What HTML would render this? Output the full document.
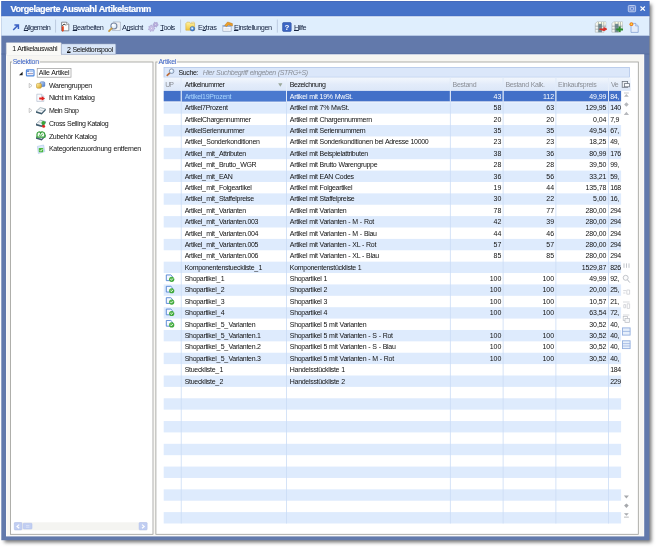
<!DOCTYPE html>
<html><head><meta charset="utf-8"><title>Vorgelagerte Auswahl Artikelstamm</title><style>html,body{margin:0;padding:0;}
html{background:#fff;}
body{width:658px;height:548px;position:relative;overflow:hidden;will-change:transform;font-family:"Liberation Sans",sans-serif;font-size:7px;letter-spacing:-0.3px;word-spacing:0.35px;color:#111;}
div,span,svg{position:absolute;box-sizing:border-box;}
span{white-space:nowrap;}
u{text-decoration:underline;text-underline-offset:-0.2px;text-decoration-thickness:0.5px;}
#title{left:10.5px;top:3.8px;-webkit-text-stroke:0.2px #fff;font-size:9.1px;font-weight:bold;color:#fff;letter-spacing:0;line-height:10px;}
.tl{top:22.9px;line-height:9px;color:#14223f;font-size:7.3px;}
.tabt{line-height:9px;color:#111;}
.gbl{color:#3b63c9;line-height:8px;}
.ht{top:80.2px;line-height:9px;}
.g{color:#8b8f96;}
.c{line-height:9px;}
.n{letter-spacing:-0.08px;}
.s{color:#fff;}
.c1.s{color:#a9d6ff;}
.ti{line-height:9px;left:48.9px;}

#shadow{left:1.3px;top:1.3px;width:648.1px;height:538.9px;box-shadow:3.3px 3.3px 3.6px 0 rgba(0,0,0,.55);}
i{font-style:normal;letter-spacing:0.35px;}
</style></head><body>
<div id="shadow"></div>
<svg style="left:0;top:0;width:658px;height:548px" viewBox="0 0 658 548"><rect x="1.30" y="1.30" width="648.10" height="538.90" fill="#6279ab"></rect>
<rect x="1.30" y="1.30" width="648.10" height="15.20" fill="#4672c8"></rect>
<rect x="1.30" y="1.30" width="648.10" height="0.70" fill="#3c60b6"></rect>
<rect x="1.30" y="15.90" width="648.10" height="0.60" fill="#3c5eb0"></rect>
<rect x="1.30" y="16.50" width="648.10" height="19.20" fill="#dfeefd"></rect>
<rect x="1.30" y="16.50" width="648.10" height="0.80" fill="#f4f9ff"></rect>
<rect x="1.30" y="35.10" width="648.10" height="0.60" fill="#b4c6e6"></rect>
<rect x="1.30" y="53.70" width="648.10" height="0.60" fill="#50669a"></rect>
<rect x="55.15" y="19.60" width="0.90" height="13.00" fill="#b9c8de"></rect>
<rect x="180.15" y="19.60" width="0.90" height="13.00" fill="#b9c8de"></rect>
<rect x="276.85" y="19.60" width="0.90" height="13.00" fill="#b9c8de"></rect>
<rect x="6.00" y="54.30" width="638.20" height="482.10" fill="#fdfdfc"></rect>
<rect x="6.60" y="55.00" width="636.90" height="480.60" fill="#f7f6f2"></rect>
<path d="M61.3 54.3V44.7Q61.3 43.9 62.1 43.9H114.9Q115.7 43.9 115.7 44.7V54.3Z" fill="#d9e6f8" stroke="#9aa7c0" stroke-width="0.5"></path>
<path d="M6.1 54.8V43.3Q6.1 42.5 6.9 42.5H60.5Q61.3 42.5 61.3 43.3V54.8Z" fill="#fafaf7" stroke="#9aa7c0" stroke-width="0.5"></path>
<rect x="6.40" y="54.00" width="54.60" height="1.40" fill="#fafaf7"></rect>
<path d="M153.7 62.5V535.0H10.9" fill="none" stroke="#ffffff" stroke-width="0.7"></path>
<rect x="10.4" y="62" width="142.6" height="472.29999999999995" fill="#fff" stroke="#9c9c98" stroke-width="0.8"></rect>
<rect x="12.00" y="60.00" width="27.80" height="4.00" fill="#f7f6f2"></rect>
<path d="M639.0 62.5V535.0H156.4" fill="none" stroke="#ffffff" stroke-width="0.7"></path>
<rect x="155.9" y="62" width="482.4" height="472.29999999999995" fill="#fff" stroke="#9c9c98" stroke-width="0.8"></rect>
<rect x="157.60" y="60.00" width="19.40" height="4.00" fill="#f7f6f2"></rect>
<rect x="37.2" y="68.4" width="33.8" height="8.8" fill="#fff" stroke="#9a9a9a" stroke-width="0.7"></rect>
<rect x="14.00" y="522.30" width="133.40" height="8.00" fill="#f4f4f1"></rect>
<rect x="14.3" y="522.5" width="7.6" height="7.4" rx="0.8" fill="#c1cef2" stroke="#aebde8" stroke-width="0.5"></rect>
<rect x="23.2" y="523.2" width="8.799999999999999" height="5.8" rx="0.8" fill="#c1cef2" stroke="#aebde8" stroke-width="0.5"></rect>
<rect x="139.10000000000002" y="522.5" width="7.999999999999995" height="7.4" rx="0.8" fill="#c1cef2" stroke="#aebde8" stroke-width="0.5"></rect>
<path d="M19.2 524.6L17 526.4L19.2 528.2M142 524.6L144.2 526.4L142 528.2" stroke="#fff" stroke-width="1.2" fill="none"></path>
<path d="M26 525.6H29.4M26 527.2H29.4" stroke="#e8eefc" stroke-width="0.6"></path>
<rect x="164" y="67.4" width="465.4" height="9.8" fill="#dbe7fa" stroke="#a9c0e6" stroke-width="0.7"></rect>
<defs><linearGradient id="hg" x1="0" y1="0" x2="0" y2="1"><stop offset="0" stop-color="#f3f7fd"></stop><stop offset="0.5" stop-color="#e3ecfa"></stop><stop offset="1" stop-color="#dce7f8"></stop></linearGradient></defs>
<rect x="163.70" y="77.60" width="466.90" height="13.30" fill="url(#hg)"></rect>
<rect x="163.70" y="90.90" width="457.40" height="10.48" fill="#4270c8"></rect>
<rect x="181.60" y="90.90" width="104.50" height="10.48" fill="#4a79cf"></rect>
<rect x="163.70" y="102.28" width="457.40" height="11.38" fill="#deebfd"></rect>
<rect x="163.70" y="125.05" width="457.40" height="11.38" fill="#deebfd"></rect>
<rect x="163.70" y="147.82" width="457.40" height="11.38" fill="#deebfd"></rect>
<rect x="163.70" y="170.59" width="457.40" height="11.38" fill="#deebfd"></rect>
<rect x="163.70" y="193.36" width="457.40" height="11.38" fill="#deebfd"></rect>
<rect x="163.70" y="216.12" width="457.40" height="11.38" fill="#deebfd"></rect>
<rect x="163.70" y="238.89" width="457.40" height="11.38" fill="#deebfd"></rect>
<rect x="163.70" y="261.66" width="457.40" height="11.38" fill="#deebfd"></rect>
<rect x="163.70" y="284.43" width="457.40" height="11.38" fill="#deebfd"></rect>
<rect x="163.70" y="307.20" width="457.40" height="11.38" fill="#deebfd"></rect>
<rect x="163.70" y="329.96" width="457.40" height="11.38" fill="#deebfd"></rect>
<rect x="163.70" y="352.73" width="457.40" height="11.38" fill="#deebfd"></rect>
<rect x="163.70" y="375.50" width="457.40" height="11.38" fill="#deebfd"></rect>
<rect x="163.70" y="398.27" width="457.40" height="11.38" fill="#deebfd"></rect>
<rect x="163.70" y="421.04" width="457.40" height="11.38" fill="#deebfd"></rect>
<rect x="163.70" y="443.80" width="457.40" height="11.38" fill="#deebfd"></rect>
<rect x="163.70" y="466.57" width="457.40" height="11.38" fill="#deebfd"></rect>
<rect x="163.70" y="489.34" width="457.40" height="11.38" fill="#deebfd"></rect>
<rect x="163.70" y="512.11" width="457.40" height="11.38" fill="#deebfd"></rect>
<rect x="180.80" y="77.60" width="0.80" height="445.89" fill="#cbdcf5"></rect>
<rect x="180.80" y="77.60" width="0.80" height="23.78" fill="#edf3fc"></rect>
<rect x="286.10" y="77.60" width="0.80" height="445.89" fill="#cbdcf5"></rect>
<rect x="286.10" y="77.60" width="0.80" height="23.78" fill="#edf3fc"></rect>
<rect x="449.90" y="77.60" width="0.80" height="445.89" fill="#cbdcf5"></rect>
<rect x="449.90" y="77.60" width="0.80" height="23.78" fill="#edf3fc"></rect>
<rect x="502.70" y="77.60" width="0.80" height="445.89" fill="#cbdcf5"></rect>
<rect x="502.70" y="77.60" width="0.80" height="23.78" fill="#edf3fc"></rect>
<rect x="555.50" y="77.60" width="0.80" height="445.89" fill="#cbdcf5"></rect>
<rect x="555.50" y="77.60" width="0.80" height="23.78" fill="#edf3fc"></rect>
<rect x="608.20" y="77.60" width="0.80" height="445.89" fill="#cbdcf5"></rect>
<rect x="608.20" y="77.60" width="0.80" height="23.78" fill="#edf3fc"></rect></svg>
<span id="title" style="letter-spacing: -0.44px;">Vorgelagerte Auswahl Artikelstamm</span>
<svg style="left:0;top:0;width:658px;height:548px" viewBox="0 0 658 548"><rect x="628.3" y="5.5" width="7.3" height="6.3" rx="0.9" fill="#7593d8" stroke="#c3d1f0" stroke-width="0.9"></rect><rect x="630.4" y="7.3" width="3.1" height="2.7" rx="0.5" fill="#5b7fd0" stroke="#c3d1f0" stroke-width="0.8"></rect></svg>
<svg style="left:640.3px;top:6.2px;width:5.4px;height:5.2px" viewBox="0 0 5.4 5.2"><path d="M0.5 0.5L4.9 4.7M4.9 0.5L0.5 4.7" stroke="#fff" stroke-width="1.2"></path></svg>
<!-- toolbar items -->
<span class="tl" style="left: 23.8px; letter-spacing: -0.64px;"><u>A</u>llgemein</span>
<span class="tl" style="left: 72.7px; letter-spacing: -0.451px;"><u>B</u>earbeiten</span>
<span class="tl" style="left: 122px; letter-spacing: -0.436px;">A<u>n</u>sicht</span>
<span class="tl" style="left: 160.3px; letter-spacing: -0.549px;"><u>T</u>ools</span>
<span class="tl" style="left: 198px; letter-spacing: -0.351px;">E<u>x</u>tras</span>
<span class="tl" style="left: 234px; letter-spacing: -0.479px;"><u>E</u>instellungen</span>
<span class="tl" style="left: 294px; letter-spacing: -0.482px;"><u>H</u>ilfe</span>
<svg style="left:0;top:0;width:658px;height:548px" viewBox="0 0 658 548">
<defs>
<linearGradient id="gf" x1="0" y1="0" x2="0" y2="1"><stop offset="0" stop-color="#fff2a0"></stop><stop offset="1" stop-color="#f0c43c"></stop></linearGradient>
<radialGradient id="gg" cx="0.4" cy="0.35" r="0.7"><stop offset="0" stop-color="#9fd0ff"></stop><stop offset="1" stop-color="#1c5fc4"></stop></radialGradient>
</defs>
<!-- allgemein arrow -->
<path d="M13.2 30L17.8 25.4M14.4 24.9H18.4V28.9" stroke="#3c62c4" stroke-width="1.5" fill="none"></path>
<!-- bearbeiten -->
<path d="M61.6 22.2H66.6L68.8 24.4V30.8H61.6Z" fill="#fdfdfd" stroke="#5c6068" stroke-width="0.7"></path>
<path d="M66.6 22.2V24.4H68.8" fill="#e6e8ec" stroke="#5c6068" stroke-width="0.5"></path>
<path d="M62.4 25.8C63 24 65.4 23.8 65.8 25.4" stroke="#222" stroke-width="0.9" fill="none"></path>
<path d="M61.8 26.2H63.8V30.6L62.8 31.9L61.8 30.6Z" fill="#e2421c"></path>
<!-- ansicht -->
<path d="M113 22H120.3V30.4H112.4V29" fill="#f9fafc" stroke="#8f9bb0" stroke-width="0.6"></path>
<path d="M115 24.2H119M115.6 26H119M115.6 27.8H119" stroke="#c9d0dc" stroke-width="0.5"></path>
<circle cx="113.9" cy="26" r="3" fill="#e6f0fc" stroke="#7786a2" stroke-width="1.1"></circle>
<circle cx="113.2" cy="25.2" r="1.3" fill="#fff" fill-opacity="0.9"></circle>
<path d="M111.7 28.3L109 31.2" stroke="#c79a42" stroke-width="1.7" stroke-linecap="round"></path>
<!-- tools gears -->
<path d="M158.20 24.60L158.11 25.27L157.27 25.56L156.96 25.96L156.90 26.85L156.27 27.11L155.60 26.52L155.10 26.46L154.30 26.85L153.76 26.44L153.93 25.56L153.74 25.10L153.00 24.60L153.09 23.93L153.93 23.64L154.24 23.24L154.30 22.35L154.93 22.09L155.60 22.68L156.10 22.74L156.90 22.35L157.44 22.76L157.27 23.64L157.46 24.10Z" fill="#bdb3e0" stroke="#8f84bc" stroke-width="0.45" stroke-linejoin="round"></path><circle cx="155.6" cy="24.6" r="0.78" fill="#f3f1fb" stroke="#8f84bc" stroke-width="0.35"></circle>
<path d="M154.90 28.30L154.82 29.03L153.80 29.36L153.51 29.82L153.66 30.88L153.03 31.27L152.14 30.68L151.60 30.74L150.87 31.52L150.17 31.27L150.08 30.21L149.69 29.82L148.63 29.73L148.38 29.03L149.16 28.30L149.22 27.76L148.63 26.87L149.02 26.24L150.08 26.39L150.54 26.10L150.87 25.08L151.60 25.00L152.14 25.92L152.66 26.10L153.66 25.72L154.18 26.24L153.80 27.24L153.98 27.76Z" fill="#cbc3e8" stroke="#958bc2" stroke-width="0.45" stroke-linejoin="round"></path><circle cx="151.6" cy="28.3" r="0.99" fill="#f3f1fb" stroke="#958bc2" stroke-width="0.35"></circle>
<!-- extras folder -->
<path d="M185.8 23.6L187 22.2H189.6L190.4 23.4H194.6V30.2H185.8Z" fill="url(#gf)" stroke="#d6aa34" stroke-width="0.5"></path>
<path d="M191 22.4L194.2 22V23.4" fill="#fff6c4" stroke="#d6aa34" stroke-width="0.4"></path>
<circle cx="192.4" cy="28.7" r="2.3" fill="url(#gg)" stroke="#1c4f9e" stroke-width="0.4"></circle>
<circle cx="192.3" cy="28.6" r="0.8" fill="#e6f3ff"></circle>
<!-- einstellungen -->
<rect x="222.9" y="25.4" width="8.2" height="5.8" fill="#fbfcfe" stroke="#8a98b0" stroke-width="0.6"></rect>
<rect x="222.9" y="25.4" width="8.2" height="1.5" fill="#8fb0e0"></rect>
<path d="M224.4 28.4H229.4M224.4 29.8H229.4" stroke="#c9d2e0" stroke-width="0.5"></path>
<path d="M224.6 25.4L227.6 22L232.4 23.6L232.4 26L228.6 24.8L226.6 26.6Z" fill="#eda02a" stroke="#b6741a" stroke-width="0.5"></path>
<!-- hilfe -->
<rect x="282.6" y="22.6" width="8.6" height="8.8" rx="1" fill="#3c66c4" stroke="#2a4c9c" stroke-width="0.6"></rect>
<text x="286.9" y="29.9" font-family="Liberation Sans, sans-serif" font-size="8" font-weight="bold" fill="#fff" text-anchor="middle">?</text>
</svg>
<!-- right toolbar icons -->
<svg style="left:0;top:0;width:658px;height:548px" viewBox="0 0 658 548">
<g transform="translate(594.8 21.2)">
<path d="M0.5 2.4L2.2 0.6H11V7.2H9.2V11H0.5Z" fill="#f3f5f3" stroke="#9aa4a2" stroke-width="0.5"></path>
<path d="M2.4 0.8H10.8V3.2H2.4Z" fill="#fdfde6"></path>
<path d="M0.6 5H11M0.6 8H9M3.6 0.8V11M6.8 0.8V11M9 0.8V7" stroke="#7f8a88" stroke-width="0.6"></path>
<path d="M3.7 2.6H6.9V11H3.7Z" fill="#54727a" fill-opacity="0.8"></path>
</g>
<path d="M599.8 29.1H604V27.8L606.4 29.1L604 30.4Z" fill="#d8302a" stroke="#d8302a" stroke-width="1.2" stroke-linejoin="round"></path>
<g transform="translate(611.4 21.2)">
<path d="M0.5 2.4L2.2 0.6H11V7.2H9.2V11H0.5Z" fill="#f3f5f3" stroke="#9aa4a2" stroke-width="0.5"></path>
<path d="M2.4 0.8H10.8V3.2H2.4Z" fill="#fdfde6"></path>
<path d="M0.6 5H11M0.6 8H9M3.6 0.8V11M6.8 0.8V11M9 0.8V7" stroke="#7f8a88" stroke-width="0.6"></path>
<path d="M3.7 2.6H6.9V11H3.7Z" fill="#54727a" fill-opacity="0.8"></path>
</g>
<path d="M616.3 29.4H623M619.6 26.4V32" stroke="#2c8c2e" stroke-width="2"></path>
<path d="M631 23.4H635.6L638.2 26V32.4H631Z" fill="#e4edfb" stroke="#7a9ad0" stroke-width="0.7"></path>
<path d="M635.6 23.4V26H638.2" fill="#c9daf4" stroke="#7a9ad0" stroke-width="0.5"></path>
<circle cx="631.4" cy="24.2" r="1.9" fill="#ee7a1c"></circle>
<circle cx="631.4" cy="24.2" r="0.9" fill="#ffd840"></circle>
</svg>
<!-- tabs and page -->
<span class="tabt" style="left: 12.2px; top: 43.8px; letter-spacing: -0.377px;">1 Artikelauswahl</span>
<span class="tabt" style="left: 67px; top: 44.6px; letter-spacing: -0.371px;"><u>2</u> Selektionspool</span>
<!-- group boxes -->
<span class="gbl" style="left: 12.7px; top: 58px; letter-spacing: -0.3px;">Selektion</span>
<span class="gbl" style="left: 158.4px; top: 58px; letter-spacing: -0.25px;">Artikel</span>
<!-- tree -->
<span class="ti" style="left: 38.8px; top: 68.2px; letter-spacing: -0.203px;">Alle Artikel</span>
<span class="ti" style="top: 81.1px; letter-spacing: -0.246px;">Warengruppen</span>
<span class="ti" style="top: 93.1px; letter-spacing: -0.379px;">Nicht im Katalog</span>
<span class="ti" style="top: 105.9px; letter-spacing: -0.481px;">Mein Shop</span>
<span class="ti" style="top: 118.9px; letter-spacing: -0.392px;">Cross Selling Katalog</span>
<span class="ti" style="top: 131.5px; letter-spacing: -0.301px;">Zubehör Katalog</span>
<span class="ti" style="top: 143.7px; letter-spacing: -0.232px;">Kategorienzuordnung entfernen</span>
<svg style="left:0;top:0;width:658px;height:548px" viewBox="0 0 658 548">
<defs>
<linearGradient id="gy" x1="0" y1="0" x2="1" y2="1"><stop offset="0" stop-color="#fff3b0"></stop><stop offset="1" stop-color="#d9a21c"></stop></linearGradient>
<linearGradient id="gb" x1="0" y1="0" x2="1" y2="1"><stop offset="0" stop-color="#d6e6ff"></stop><stop offset="1" stop-color="#3f74c8"></stop></linearGradient>
</defs>
<!-- expander alle -->
<path d="M22.6 71.8V75.2H19Z" fill="#1c1c1c"></path>
<!-- alle artikel icon -->
<rect x="26.4" y="69.7" width="7.6" height="6.2" rx="0.7" fill="#f3f6fc" stroke="#4c86dc" stroke-width="1.1"></rect>
<rect x="27.2" y="70.4" width="1.6" height="1.5" fill="#2f63c4"></rect>
<path d="M29.4 71.2H33.2" stroke="#7fa6e4" stroke-width="0.8"></path>
<path d="M27.6 73.6H33" stroke="#9a8fb0" stroke-width="0.9"></path>
<!-- expanders -->
<path d="M29.2 83.4L32 85.6L29.2 87.8Z" fill="#fff" stroke="#a6a6a6" stroke-width="0.6"></path>
<path d="M29.2 108.2L32 110.4L29.2 112.6Z" fill="#fff" stroke="#a6a6a6" stroke-width="0.6"></path>
<!-- warengruppen -->
<rect x="40" y="81.8" width="4.8" height="4.8" rx="1.2" fill="url(#gb)" stroke="#3f66ae" stroke-width="0.5"></rect>
<rect x="36.5" y="83.4" width="4.9" height="4.8" rx="1.2" fill="url(#gy)" stroke="#b98a1a" stroke-width="0.5"></rect>
<!-- nicht im katalog -->
<path d="M36.8 94.2H41.6L43.8 96.4V101.4H36.8Z" fill="#f8fafd" stroke="#a9b6c8" stroke-width="0.6"></path>
<path d="M41.6 94.2V96.4H43.8" fill="#e2e9f3" stroke="#a9b6c8" stroke-width="0.5"></path>
<path d="M39.2 97.6H41.8V96.2L45 98.5L41.8 100.8V99.4H39.2Z" fill="#e0201c"></path>
<!-- mein shop book -->
<g id="book">
<path d="M36 111.4L40.2 107.6L45.6 109L41.6 113.2Z" fill="#f4f7f9" stroke="#5c7482" stroke-width="0.5"></path>
<path d="M38.2 109.6L43.4 111" stroke="#9fb0ba" stroke-width="0.5"></path>
<path d="M36 111.2L41.6 113L45.6 108.8V110.4L41.7 114.5L36 112.8Z" fill="#3d5a6c"></path>
</g>
<!-- cross selling -->
<use href="#book" y="12.6"></use>
<circle cx="43.4" cy="123" r="2" fill="#3aa63a"></circle>
<circle cx="43.6" cy="126.2" r="1.5" fill="#dc2a22"></circle>
<!-- zubehoer -->
<use href="#book" y="26"></use>
<path d="M37 134.2C37 131.6 40.2 131.4 40.6 133C41.2 131.4 44.8 131.6 44.8 134.2V137.2H37Z" fill="#f2faf0" stroke="#2f9e34" stroke-width="1.2"></path>
<path d="M39 134.8L40.6 136.2L43 133.6" stroke="#2f9e34" stroke-width="0.9" fill="none"></path>
<!-- kategorien -->
<path d="M37.4 146.4L43.6 145L44.8 151.6L38.4 153.6Z" fill="#dbe9fa" stroke="#a8c4e8" stroke-width="0.6"></path>
<rect x="38.8" y="148" width="4.4" height="4.2" rx="0.6" fill="#49b83c"></rect>
<path d="M39.8 150.2L40.8 151.2L42.4 149" stroke="#fff" stroke-width="0.8" fill="none"></path>
</svg>
<!-- search -->
<svg style="left:0;top:0;width:658px;height:548px" viewBox="0 0 658 548"><path d="M169.9 72.9L167.2 75.3" stroke="#bd6a34" stroke-width="1.7" stroke-linecap="round"></path><circle cx="171.6" cy="71.2" r="2.3" fill="#d4e7fb" stroke="#7f8ea8" stroke-width="0.9"></circle><circle cx="171.2" cy="70.7" r="1" fill="#fff" fill-opacity="0.85"></circle></svg>
<span style="left: 178.6px; top: 68.2px; line-height: 9px; letter-spacing: -0.416px;">Suche:</span>
<span style="left: 202.7px; top: 68.2px; line-height: 9px; font-style: italic; color: rgb(138, 143, 152); letter-spacing: -0.344px;">Hier Suchbegriff eingeben (STRG+S)</span>
<!-- header -->
<span class="ht g" style="left: 165.2px; letter-spacing: -1.067px;">UP</span>
<span class="ht" style="left: 184.7px; letter-spacing: -0.41px;">Artikelnummer</span>
<span class="ht" style="left: 289.8px; letter-spacing: -0.435px;">Bezeichnung</span>
<span class="ht g" style="left: 452.6px; letter-spacing: -0.284px;">Bestand</span>
<span class="ht g" style="left: 505.4px; letter-spacing: -0.334px;">Bestand Kalk.</span>
<span class="ht g" style="left: 558.1px; letter-spacing: -0.272px;">Einkaufspreis</span>
<span class="ht g" style="left: 610.9px; letter-spacing: -0.544px;">Ve</span>
<svg style="left:278.2px;top:83px;width:4.6px;height:4px" viewBox="0 0 4.6 4"><path d="M0.2 0.3H4.4L2.3 3.8Z" fill="#9aa79a"></path></svg>
<svg style="left:0;top:0;width:658px;height:548px" viewBox="0 0 658 548">
<!-- header button -->
<rect x="622.2" y="81.5" width="5.4" height="5.8" fill="#eef1f6" stroke="#6d7580" stroke-width="0.8"></rect>
<rect x="624.6" y="83.6" width="4.8" height="3.2" fill="#f7f9fc" stroke="#6d7580" stroke-width="0.8"></rect>
<!-- top nav -->
<g fill="#b6b8bc">
<path d="M624 92.6H628.8V93.4H624Z"></path><path d="M626.4 94L628.8 96.8H624Z"></path>
<path d="M626.4 102.2L628.7 104.6L626.4 106.8L624.1 104.6Z"></path>
<path d="M626.4 111.8L629 114.9H623.8Z"></path>
</g>
<!-- mid icons -->
<path d="M624 263.4V267.8M626.5 263.4V267.8M629 263.4V267.8" stroke="#b4b8be" stroke-width="0.8"></path>
<circle cx="625.7" cy="277.8" r="2.5" fill="#fbfbfc" stroke="#b4b8be" stroke-width="0.8"></circle><path d="M627.5 279.8L629.8 282.6" stroke="#b4b8be" stroke-width="1"></path>
<path d="M623.2 290.6H626M623.2 293H625.4M626.8 290H629.6V294.2H626.8Z" stroke="#c6c9ce" stroke-width="0.7" fill="none"></path>
<path d="M623 302H629.6M627.2 303.8H629.6V308.4H627.2ZM623.8 304.6H625.6V307.8H623.8Z" stroke="#c6c9ce" stroke-width="0.7" fill="none"></path>
<path d="M623 315H629.4" stroke="#c6c9ce" stroke-width="0.7"></path>
<rect x="623.2" y="316.6" width="4.4" height="4" fill="none" stroke="#b9bdc4" stroke-width="0.7"></rect><rect x="625" y="318.4" width="4.6" height="4" fill="#f6f7f9" stroke="#b9bdc4" stroke-width="0.7"></rect>
<rect x="622.5" y="327.9" width="7.6" height="7.2" fill="#e6effb" stroke="#93aede" stroke-width="0.9"></rect><path d="M622.5 331.4H630.1" stroke="#93aede" stroke-width="0.8"></path>
<rect x="622.5" y="340.8" width="7.6" height="7.8" fill="#e6effb" stroke="#93aede" stroke-width="0.9"></rect><path d="M622.5 343.6H630.1M622.5 346H630.1" stroke="#93aede" stroke-width="0.7"></path>
<!-- bottom nav -->
<g fill="#a6a8ac">
<path d="M623.9 495.6H628.9L626.4 498.6Z"></path>
<path d="M626.4 503.6L628.7 505.6L626.4 508.1L624.1 505.6Z"></path>
<path d="M624 513.2H628.8L626.4 515.8Z"></path><path d="M624 516.7H628.8V517.5H624Z"></path>
</g>
</svg>

<span class="c c1 s" style="top:91.90px;left:184.7px">Artikel19Prozent</span>
<span class="c c2 s" style="top:91.90px;left:289.8px">Artikel mit 19% MwSt.</span>
<span class="c n s" style="top:91.90px;right:156.8px">43</span>
<span class="c n s" style="top:91.90px;right:104.0px">112</span>
<span class="c n s" style="top:91.90px;right:51.6px">49,99</span>
<span class="c c6 s" style="top:91.90px;left:610.2px">84,</span>
<span class="c c1" style="top:103.28px;left:184.7px">Artikel7Prozent</span>
<span class="c c2" style="top:103.28px;left:289.8px">Artikel mit 7% MwSt.</span>
<span class="c n" style="top:103.28px;right:156.8px">58</span>
<span class="c n" style="top:103.28px;right:104.0px">63</span>
<span class="c n" style="top:103.28px;right:51.6px">129,95</span>
<span class="c c6" style="top:103.28px;left:610.2px">140</span>
<span class="c c1" style="top:114.67px;left:184.7px">ArtikelChargennummer</span>
<span class="c c2" style="top:114.67px;left:289.8px">Artikel mit Chargennummern</span>
<span class="c n" style="top:114.67px;right:156.8px">20</span>
<span class="c n" style="top:114.67px;right:104.0px">20</span>
<span class="c n" style="top:114.67px;right:51.6px">0,04</span>
<span class="c c6" style="top:114.67px;left:610.2px">7,9</span>
<span class="c c1" style="top:126.05px;left:184.7px">ArtikelSeriennummer</span>
<span class="c c2" style="top:126.05px;left:289.8px">Artikel mit Seriennummern</span>
<span class="c n" style="top:126.05px;right:156.8px">35</span>
<span class="c n" style="top:126.05px;right:104.0px">35</span>
<span class="c n" style="top:126.05px;right:51.6px">49,54</span>
<span class="c c6" style="top:126.05px;left:610.2px">67,</span>
<span class="c c1" style="top:137.44px;left:184.7px">Artikel<i>_</i>Sonderkonditionen</span>
<span class="c c2" style="top:137.44px;left:289.8px">Artikel mit Sonderkonditionen bei Adresse 10000</span>
<span class="c n" style="top:137.44px;right:156.8px">23</span>
<span class="c n" style="top:137.44px;right:104.0px">23</span>
<span class="c n" style="top:137.44px;right:51.6px">18,25</span>
<span class="c c6" style="top:137.44px;left:610.2px">49,</span>
<span class="c c1" style="top:148.82px;left:184.7px">Artikel<i>_</i>mit<i>_</i>Attributen</span>
<span class="c c2" style="top:148.82px;left:289.8px">Artikel mit Beispielattributen</span>
<span class="c n" style="top:148.82px;right:156.8px">38</span>
<span class="c n" style="top:148.82px;right:104.0px">36</span>
<span class="c n" style="top:148.82px;right:51.6px">80,99</span>
<span class="c c6" style="top:148.82px;left:610.2px">176</span>
<span class="c c1" style="top:160.20px;left:184.7px">Artikel<i>_</i>mit<i>_</i>Brutto<i>_</i>WGR</span>
<span class="c c2" style="top:160.20px;left:289.8px">Artikel mit Brutto Warengruppe</span>
<span class="c n" style="top:160.20px;right:156.8px">28</span>
<span class="c n" style="top:160.20px;right:104.0px">28</span>
<span class="c n" style="top:160.20px;right:51.6px">39,50</span>
<span class="c c6" style="top:160.20px;left:610.2px">99,</span>
<span class="c c1" style="top:171.59px;left:184.7px">Artikel<i>_</i>mit<i>_</i>EAN</span>
<span class="c c2" style="top:171.59px;left:289.8px">Artikel mit EAN Codes</span>
<span class="c n" style="top:171.59px;right:156.8px">36</span>
<span class="c n" style="top:171.59px;right:104.0px">56</span>
<span class="c n" style="top:171.59px;right:51.6px">33,21</span>
<span class="c c6" style="top:171.59px;left:610.2px">59,</span>
<span class="c c1" style="top:182.97px;left:184.7px">Artikel<i>_</i>mit<i>_</i>Folgeartikel</span>
<span class="c c2" style="top:182.97px;left:289.8px">Artikel mit Folgeartikel</span>
<span class="c n" style="top:182.97px;right:156.8px">19</span>
<span class="c n" style="top:182.97px;right:104.0px">44</span>
<span class="c n" style="top:182.97px;right:51.6px">135,78</span>
<span class="c c6" style="top:182.97px;left:610.2px">168</span>
<span class="c c1" style="top:194.36px;left:184.7px">Artikel<i>_</i>mit<i>_</i>Staffelpreise</span>
<span class="c c2" style="top:194.36px;left:289.8px">Artikel mit Staffelpreise</span>
<span class="c n" style="top:194.36px;right:156.8px">30</span>
<span class="c n" style="top:194.36px;right:104.0px">22</span>
<span class="c n" style="top:194.36px;right:51.6px">5,00</span>
<span class="c c6" style="top:194.36px;left:610.2px">16,</span>
<span class="c c1" style="top:205.74px;left:184.7px">Artikel<i>_</i>mit<i>_</i>Varianten</span>
<span class="c c2" style="top:205.74px;left:289.8px">Artikel mit Varianten</span>
<span class="c n" style="top:205.74px;right:156.8px">78</span>
<span class="c n" style="top:205.74px;right:104.0px">77</span>
<span class="c n" style="top:205.74px;right:51.6px">280,00</span>
<span class="c c6" style="top:205.74px;left:610.2px">294</span>
<span class="c c1" style="top:217.12px;left:184.7px">Artikel<i>_</i>mit<i>_</i>Varianten.003</span>
<span class="c c2" style="top:217.12px;left:289.8px">Artikel mit Varianten - M - Rot</span>
<span class="c n" style="top:217.12px;right:156.8px">42</span>
<span class="c n" style="top:217.12px;right:104.0px">39</span>
<span class="c n" style="top:217.12px;right:51.6px">280,00</span>
<span class="c c6" style="top:217.12px;left:610.2px">294</span>
<span class="c c1" style="top:228.51px;left:184.7px">Artikel<i>_</i>mit<i>_</i>Varianten.004</span>
<span class="c c2" style="top:228.51px;left:289.8px">Artikel mit Varianten - M - Blau</span>
<span class="c n" style="top:228.51px;right:156.8px">44</span>
<span class="c n" style="top:228.51px;right:104.0px">46</span>
<span class="c n" style="top:228.51px;right:51.6px">280,00</span>
<span class="c c6" style="top:228.51px;left:610.2px">294</span>
<span class="c c1" style="top:239.89px;left:184.7px">Artikel<i>_</i>mit<i>_</i>Varianten.005</span>
<span class="c c2" style="top:239.89px;left:289.8px">Artikel mit Varianten - XL - Rot</span>
<span class="c n" style="top:239.89px;right:156.8px">57</span>
<span class="c n" style="top:239.89px;right:104.0px">57</span>
<span class="c n" style="top:239.89px;right:51.6px">280,00</span>
<span class="c c6" style="top:239.89px;left:610.2px">294</span>
<span class="c c1" style="top:251.28px;left:184.7px">Artikel<i>_</i>mit<i>_</i>Varianten.006</span>
<span class="c c2" style="top:251.28px;left:289.8px">Artikel mit Varianten - XL - Blau</span>
<span class="c n" style="top:251.28px;right:156.8px">85</span>
<span class="c n" style="top:251.28px;right:104.0px">85</span>
<span class="c n" style="top:251.28px;right:51.6px">280,00</span>
<span class="c c6" style="top:251.28px;left:610.2px">294</span>
<span class="c c1" style="top:262.66px;left:184.7px">Komponentenstueckliste<i>_</i>1</span>
<span class="c c2" style="top:262.66px;left:289.8px">Komponentenstückliste 1</span>
<span class="c n" style="top:262.66px;right:51.6px">1529,87</span>
<span class="c c6" style="top:262.66px;left:610.2px">826</span>
<span class="c c1" style="top:274.04px;left:184.7px">Shopartikel<i>_</i>1</span>
<span class="c c2" style="top:274.04px;left:289.8px">Shopartikel 1</span>
<span class="c n" style="top:274.04px;right:156.8px">100</span>
<span class="c n" style="top:274.04px;right:104.0px">100</span>
<span class="c n" style="top:274.04px;right:51.6px">49,99</span>
<span class="c c6" style="top:274.04px;left:610.2px">92,</span>
<span class="c c1" style="top:285.43px;left:184.7px">Shopartikel<i>_</i>2</span>
<span class="c c2" style="top:285.43px;left:289.8px">Shopartikel 2</span>
<span class="c n" style="top:285.43px;right:156.8px">100</span>
<span class="c n" style="top:285.43px;right:104.0px">100</span>
<span class="c n" style="top:285.43px;right:51.6px">20,00</span>
<span class="c c6" style="top:285.43px;left:610.2px">25,</span>
<span class="c c1" style="top:296.81px;left:184.7px">Shopartikel<i>_</i>3</span>
<span class="c c2" style="top:296.81px;left:289.8px">Shopartikel 3</span>
<span class="c n" style="top:296.81px;right:156.8px">100</span>
<span class="c n" style="top:296.81px;right:104.0px">100</span>
<span class="c n" style="top:296.81px;right:51.6px">10,57</span>
<span class="c c6" style="top:296.81px;left:610.2px">21,</span>
<span class="c c1" style="top:308.20px;left:184.7px">Shopartikel<i>_</i>4</span>
<span class="c c2" style="top:308.20px;left:289.8px">Shopartikel 4</span>
<span class="c n" style="top:308.20px;right:156.8px">100</span>
<span class="c n" style="top:308.20px;right:104.0px">100</span>
<span class="c n" style="top:308.20px;right:51.6px">63,54</span>
<span class="c c6" style="top:308.20px;left:610.2px">72,</span>
<span class="c c1" style="top:319.58px;left:184.7px">Shopartikel<i>_</i>5<i>_</i>Varianten</span>
<span class="c c2" style="top:319.58px;left:289.8px">Shopartikel 5 mit Varianten</span>
<span class="c n" style="top:319.58px;right:51.6px">30,52</span>
<span class="c c6" style="top:319.58px;left:610.2px">40,</span>
<span class="c c1" style="top:330.96px;left:184.7px">Shopartikel<i>_</i>5<i>_</i>Varianten.1</span>
<span class="c c2" style="top:330.96px;left:289.8px">Shopartikel 5 mit Varianten - S - Rot</span>
<span class="c n" style="top:330.96px;right:156.8px">100</span>
<span class="c n" style="top:330.96px;right:104.0px">100</span>
<span class="c n" style="top:330.96px;right:51.6px">30,52</span>
<span class="c c6" style="top:330.96px;left:610.2px">40,</span>
<span class="c c1" style="top:342.35px;left:184.7px">Shopartikel<i>_</i>5<i>_</i>Varianten.2</span>
<span class="c c2" style="top:342.35px;left:289.8px">Shopartikel 5 mit Varianten - S - Blau</span>
<span class="c n" style="top:342.35px;right:156.8px">100</span>
<span class="c n" style="top:342.35px;right:104.0px">100</span>
<span class="c n" style="top:342.35px;right:51.6px">30,52</span>
<span class="c c6" style="top:342.35px;left:610.2px">40,</span>
<span class="c c1" style="top:353.73px;left:184.7px">Shopartikel<i>_</i>5<i>_</i>Varianten.3</span>
<span class="c c2" style="top:353.73px;left:289.8px">Shopartikel 5 mit Varianten - M - Rot</span>
<span class="c n" style="top:353.73px;right:156.8px">100</span>
<span class="c n" style="top:353.73px;right:104.0px">100</span>
<span class="c n" style="top:353.73px;right:51.6px">30,52</span>
<span class="c c6" style="top:353.73px;left:610.2px">40,</span>
<span class="c c1" style="top:365.12px;left:184.7px">Stueckliste<i>_</i>1</span>
<span class="c c2" style="top:365.12px;left:289.8px">Handelsstückliste 1</span>
<span class="c c6" style="top:365.12px;left:610.2px">184</span>
<span class="c c1" style="top:376.50px;left:184.7px">Stueckliste<i>_</i>2</span>
<span class="c c2" style="top:376.50px;left:289.8px">Handelsstückliste 2</span>
<span class="c c6" style="top:376.50px;left:610.2px">229</span>
<svg style="left:0;top:0;width:658px;height:548px" viewBox="0 0 658 548"><g transform="translate(165.8 274.44)"><path d="M0.5 0.5H5L6.6 2V6.2H0.5Z" fill="#f6f9fd" stroke="#4f82d2" stroke-width="0.9"></path><circle cx="5.9" cy="4.9" r="2.6" fill="#3fa83a"></circle><circle cx="5.5" cy="4.4" r="1.3" fill="#7fd070" fill-opacity="0.6"></circle><path d="M4.6 4.9l1 1 1.7-2" stroke="#fff" stroke-width="0.8" fill="none"></path></g>
<g transform="translate(165.8 285.83)"><path d="M0.5 0.5H5L6.6 2V6.2H0.5Z" fill="#f6f9fd" stroke="#4f82d2" stroke-width="0.9"></path><circle cx="5.9" cy="4.9" r="2.6" fill="#3fa83a"></circle><circle cx="5.5" cy="4.4" r="1.3" fill="#7fd070" fill-opacity="0.6"></circle><path d="M4.6 4.9l1 1 1.7-2" stroke="#fff" stroke-width="0.8" fill="none"></path></g>
<g transform="translate(165.8 297.21)"><path d="M0.5 0.5H5L6.6 2V6.2H0.5Z" fill="#f6f9fd" stroke="#4f82d2" stroke-width="0.9"></path><circle cx="5.9" cy="4.9" r="2.6" fill="#3fa83a"></circle><circle cx="5.5" cy="4.4" r="1.3" fill="#7fd070" fill-opacity="0.6"></circle><path d="M4.6 4.9l1 1 1.7-2" stroke="#fff" stroke-width="0.8" fill="none"></path></g>
<g transform="translate(165.8 308.60)"><path d="M0.5 0.5H5L6.6 2V6.2H0.5Z" fill="#f6f9fd" stroke="#4f82d2" stroke-width="0.9"></path><circle cx="5.9" cy="4.9" r="2.6" fill="#3fa83a"></circle><circle cx="5.5" cy="4.4" r="1.3" fill="#7fd070" fill-opacity="0.6"></circle><path d="M4.6 4.9l1 1 1.7-2" stroke="#fff" stroke-width="0.8" fill="none"></path></g>
<g transform="translate(165.8 319.98)"><path d="M0.5 0.5H5L6.6 2V6.2H0.5Z" fill="#f6f9fd" stroke="#4f82d2" stroke-width="0.9"></path><circle cx="5.9" cy="4.9" r="2.6" fill="#3fa83a"></circle><circle cx="5.5" cy="4.4" r="1.3" fill="#7fd070" fill-opacity="0.6"></circle><path d="M4.6 4.9l1 1 1.7-2" stroke="#fff" stroke-width="0.8" fill="none"></path></g></svg>
</body></html>
